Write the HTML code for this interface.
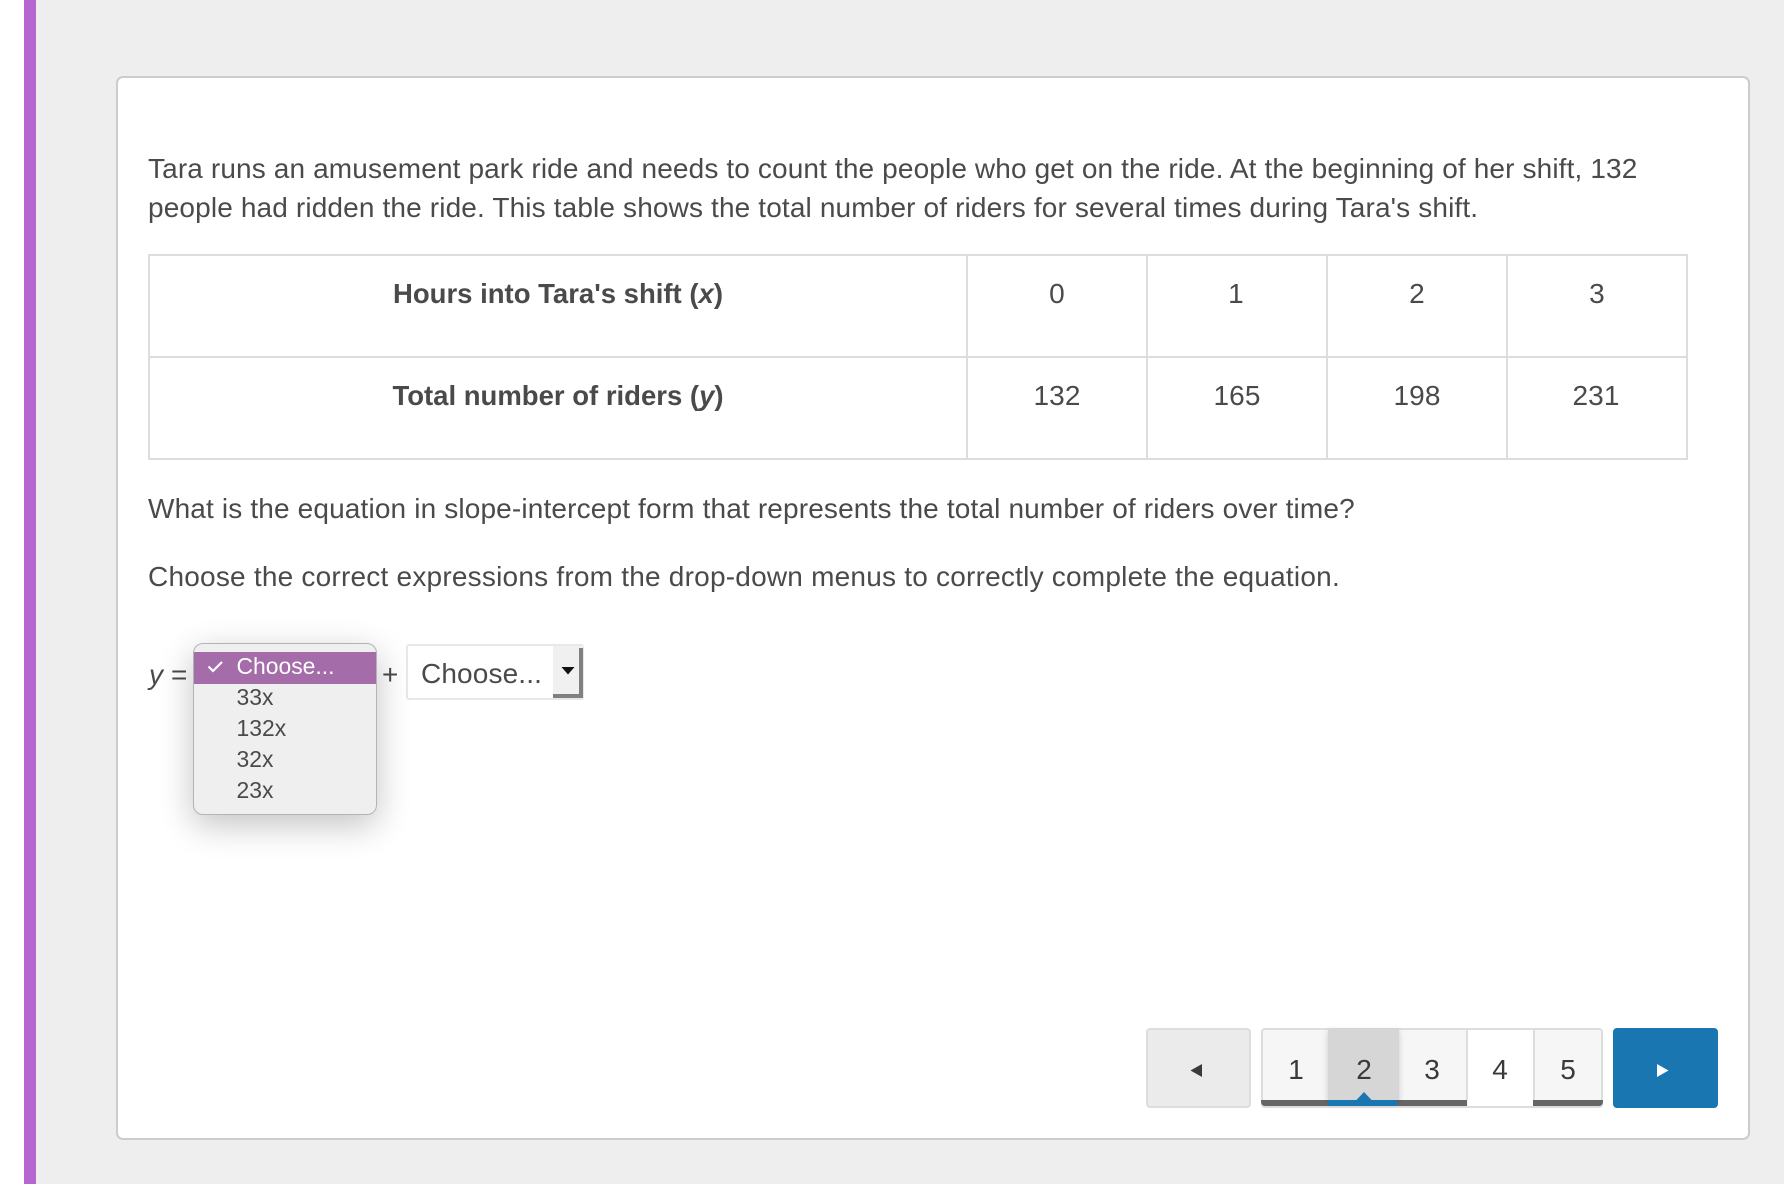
<!DOCTYPE html>
<html lang="en">
<head>
<meta charset="utf-8">
<title>Question</title>
<style>
html,body{margin:0;padding:0;}
body{width:1784px;height:1184px;position:relative;overflow:hidden;background:#eeeeee;font-family:"Liberation Sans",sans-serif;color:#4a4a4a;}
.a{position:absolute;}
.t{position:absolute;white-space:nowrap;font-size:28px;line-height:40px;height:40px;letter-spacing:.13px;}
.c{text-align:center;}
.b{font-weight:bold;font-size:27.5px;letter-spacing:0;}
.hl{position:absolute;background:#dddddd;}
.item{position:absolute;left:236.5px;white-space:nowrap;font-size:22.9px;line-height:30px;height:30px;color:#4a4a4a;}
.dg{position:absolute;top:1050px;width:60px;text-align:center;font-size:28px;line-height:40px;height:40px;color:#3a3a3a;}
.bar{position:absolute;top:1100px;height:6px;background:#666666;}
</style>
</head>
<body>
<div class="a" style="left:0;top:0;width:24px;height:1184px;background:#ffffff;"></div>
<div class="a" style="left:24px;top:0;width:12px;height:1184px;background:#b666cf;"></div>

<div class="a" style="left:116px;top:76px;width:1630px;height:1060px;background:#ffffff;border:2px solid #cccccc;border-radius:7px;"></div>

<div class="t" style="left:148px;top:149px;">Tara runs an amusement park ride and needs to count the people who get on the ride. At the beginning of her shift, 132</div>
<div class="t" style="left:148px;top:188px;letter-spacing:.14px;">people had ridden the ride. This table shows the total number of riders for several times during Tara's shift.</div>

<!-- table lines -->
<div class="hl" style="left:148px;top:254px;width:1540px;height:2px;"></div>
<div class="hl" style="left:148px;top:356px;width:1540px;height:2px;"></div>
<div class="hl" style="left:148px;top:458px;width:1540px;height:2px;"></div>
<div class="hl" style="left:148px;top:254px;width:2px;height:206px;"></div>
<div class="hl" style="left:966px;top:254px;width:2px;height:206px;"></div>
<div class="hl" style="left:1146px;top:254px;width:2px;height:206px;"></div>
<div class="hl" style="left:1326px;top:254px;width:2px;height:206px;"></div>
<div class="hl" style="left:1506px;top:254px;width:2px;height:206px;"></div>
<div class="hl" style="left:1686px;top:254px;width:2px;height:206px;"></div>

<div class="t c b" style="left:150px;top:274px;width:816px;">Hours into Tara's shift (<i>x</i>)</div>
<div class="t c" style="left:968px;top:274px;width:178px;">0</div>
<div class="t c" style="left:1147px;top:274px;width:178px;">1</div>
<div class="t c" style="left:1328px;top:274px;width:178px;">2</div>
<div class="t c" style="left:1508px;top:274px;width:178px;">3</div>

<div class="t c b" style="left:150px;top:376px;width:816px;">Total number of riders (<i>y</i>)</div>
<div class="t c" style="left:968px;top:376px;width:178px;">132</div>
<div class="t c" style="left:1148px;top:376px;width:178px;">165</div>
<div class="t c" style="left:1328px;top:376px;width:178px;">198</div>
<div class="t c" style="left:1507px;top:376px;width:178px;">231</div>

<div class="t" style="left:148px;top:489px;letter-spacing:.15px;">What is the equation in slope-intercept form that represents the total number of riders over time?</div>
<div class="t" style="left:148px;top:557px;letter-spacing:.22px;">Choose the correct expressions from the drop-down menus to correctly complete the equation.</div>

<div class="t" style="left:149px;top:655px;"><i>y</i> =</div>
<div class="t" style="left:382px;top:655px;">+</div>

<!-- second select -->
<div class="a" style="left:406px;top:644px;width:174px;height:52px;background:#ffffff;border:2px solid #e8e8e8;border-radius:3px;"></div>
<div class="t" style="left:421px;top:654px;">Choose...</div>
<div class="a" style="left:553px;top:646px;width:30px;height:52px;background:#f0f0f0;"></div>
<div class="a" style="left:579px;top:648px;width:4px;height:50px;background:#808080;"></div>
<div class="a" style="left:553px;top:694px;width:30px;height:4px;background:#808080;"></div>
<svg class="a" style="left:560px;top:666px;" width="16" height="10"><path d="M1.5 1 H14.5 L8 8.5 Z" fill="#111111"/></svg>

<!-- popup -->
<div class="a" style="left:193px;top:643px;width:182px;height:170px;background:#efefef;border:1px solid #b4b4b4;border-radius:10px;box-shadow:0 10px 34px rgba(0,0,0,.24);"></div>
<div class="a" style="left:194px;top:652px;width:182px;height:32px;background:#a46ca8;"></div>
<svg class="a" style="left:207px;top:658px;" width="20" height="18"><path d="M1.5 8.5 L6 13 L15 4" fill="none" stroke="#ffffff" stroke-width="2.2"/></svg>
<div class="item" style="top:651px;color:#ffffff;">Choose...</div>
<div class="item" style="top:682px;">33x</div>
<div class="item" style="top:713px;">132x</div>
<div class="item" style="top:744px;">32x</div>
<div class="item" style="top:775px;">23x</div>

<!-- pagination -->
<div class="a" style="left:1146px;top:1028px;width:101px;height:76px;background:#ebebeb;border:2px solid #dddddd;border-radius:4px;"></div>
<svg class="a" style="left:1188px;top:1062px;" width="16" height="17"><path d="M14 2 V15 L2.5 8.5 Z" fill="#3a3a3a"/></svg>

<div class="a" style="left:1261px;top:1028px;width:338px;height:76px;background:#f6f6f6;border:2px solid #dddddd;border-radius:4px;"></div>
<div class="a" style="left:1466px;top:1030px;width:2px;height:70px;background:#dddddd;"></div>
<div class="a" style="left:1533px;top:1030px;width:2px;height:70px;background:#dddddd;"></div>
<div class="a" style="left:1468px;top:1030px;width:65px;height:76px;background:#ffffff;"></div>
<div class="bar" style="left:1261px;width:68px;border-radius:0 0 0 4px;"></div>
<div class="bar" style="left:1397px;width:70px;"></div>
<div class="bar" style="left:1533px;width:70px;border-radius:0 0 4px 0;"></div>
<div class="a" style="left:1328px;top:1029px;width:71px;height:71px;background:#d6d6d6;box-shadow:0 2px 6px rgba(0,0,0,.18);"></div>
<div class="bar" style="left:1328px;width:69px;background:#1976b0;"></div>
<svg class="a" style="left:1355px;top:1091px;" width="18" height="10"><path d="M9 1 L17 9.5 H1 Z" fill="#1976b0"/></svg>
<div class="dg" style="left:1266px;">1</div>
<div class="dg" style="left:1334px;">2</div>
<div class="dg" style="left:1402px;">3</div>
<div class="dg" style="left:1470px;">4</div>
<div class="dg" style="left:1538px;">5</div>

<div class="a" style="left:1613px;top:1028px;width:105px;height:80px;background:#1976b0;border-radius:4px;"></div>
<svg class="a" style="left:1655px;top:1062px;" width="16" height="17"><path d="M2 2 V15 L13.5 8.5 Z" fill="#ffffff"/></svg>
</body>
</html>
